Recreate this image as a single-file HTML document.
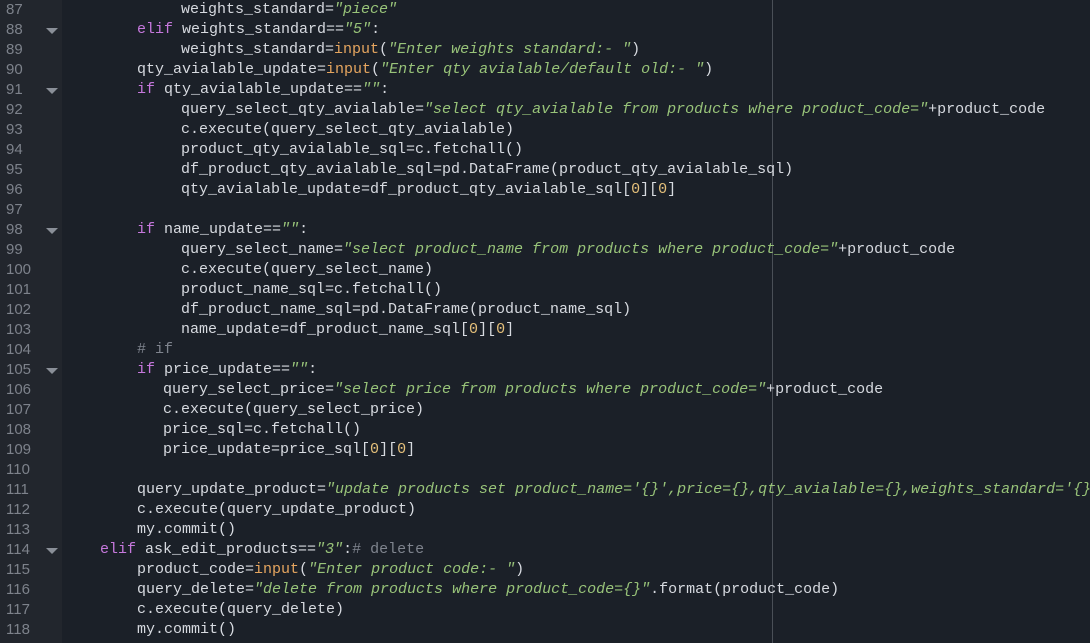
<!DOCTYPE html>
<html><head><meta charset="utf-8"><style>
html,body{margin:0;padding:0;width:1090px;height:643px;overflow:hidden;background:#1b2028;}
#g{position:absolute;left:0;top:0;width:62px;height:643px;background:#22262d;}
#r{position:absolute;left:772px;top:0;width:1px;height:643px;background:#4a4f57;}
.l{position:absolute;height:20px;line-height:20px;font-family:"Liberation Mono",monospace;font-size:15px;color:#d7dae0;white-space:pre;}
.n{position:absolute;left:6px;height:20px;line-height:20px;font-family:"Liberation Sans",sans-serif;font-size:15px;color:#7d828b;}
.a{position:absolute;left:46px;width:0;height:0;border-left:6px solid transparent;border-right:6px solid transparent;border-top:6px solid #8a8f98;}
.k{color:#c678dd}.s{color:#98c379;font-style:italic}.f{color:#e5a55f}.d{color:#e5c07b}.c{color:#7f848e}
</style></head><body>
<div id="g"></div><div id="r"></div>
<div class="n" style="top:0">87</div>
<div class="n" style="top:20px">88</div><div class="a" style="top:28px"></div>
<div class="n" style="top:40px">89</div>
<div class="n" style="top:60px">90</div>
<div class="n" style="top:80px">91</div><div class="a" style="top:88px"></div>
<div class="n" style="top:100px">92</div>
<div class="n" style="top:120px">93</div>
<div class="n" style="top:140px">94</div>
<div class="n" style="top:160px">95</div>
<div class="n" style="top:180px">96</div>
<div class="n" style="top:200px">97</div>
<div class="n" style="top:220px">98</div><div class="a" style="top:228px"></div>
<div class="n" style="top:240px">99</div>
<div class="n" style="top:260px">100</div>
<div class="n" style="top:280px">101</div>
<div class="n" style="top:300px">102</div>
<div class="n" style="top:320px">103</div>
<div class="n" style="top:340px">104</div>
<div class="n" style="top:360px">105</div><div class="a" style="top:368px"></div>
<div class="n" style="top:380px">106</div>
<div class="n" style="top:400px">107</div>
<div class="n" style="top:420px">108</div>
<div class="n" style="top:440px">109</div>
<div class="n" style="top:460px">110</div>
<div class="n" style="top:480px">111</div>
<div class="n" style="top:500px">112</div>
<div class="n" style="top:520px">113</div>
<div class="n" style="top:540px">114</div><div class="a" style="top:548px"></div>
<div class="n" style="top:560px">115</div>
<div class="n" style="top:580px">116</div>
<div class="n" style="top:600px">117</div>
<div class="n" style="top:620px">118</div>

<div class="l" style="top:0;left:181px">weights_standard=<span class="s">"piece"</span></div>
<div class="l" style="top:20px;left:137px"><span class="k">elif</span> weights_standard==<span class="s">"5"</span>:</div>
<div class="l" style="top:40px;left:181px">weights_standard=<span class="f">input</span>(<span class="s">"Enter weights standard:- "</span>)</div>
<div class="l" style="top:60px;left:137px">qty_avialable_update=<span class="f">input</span>(<span class="s">"Enter qty avialable/default old:- "</span>)</div>
<div class="l" style="top:80px;left:137px"><span class="k">if</span> qty_avialable_update==<span class="s">""</span>:</div>
<div class="l" style="top:100px;left:181px">query_select_qty_avialable=<span class="s">"select qty_avialable from products where product_code="</span>+product_code</div>
<div class="l" style="top:120px;left:181px">c.execute(query_select_qty_avialable)</div>
<div class="l" style="top:140px;left:181px">product_qty_avialable_sql=c.fetchall()</div>
<div class="l" style="top:160px;left:181px">df_product_qty_avialable_sql=pd.DataFrame(product_qty_avialable_sql)</div>
<div class="l" style="top:180px;left:181px">qty_avialable_update=df_product_qty_avialable_sql[<span class="d">0</span>][<span class="d">0</span>]</div>
<div class="l" style="top:220px;left:137px"><span class="k">if</span> name_update==<span class="s">""</span>:</div>
<div class="l" style="top:240px;left:181px">query_select_name=<span class="s">"select product_name from products where product_code="</span>+product_code</div>
<div class="l" style="top:260px;left:181px">c.execute(query_select_name)</div>
<div class="l" style="top:280px;left:181px">product_name_sql=c.fetchall()</div>
<div class="l" style="top:300px;left:181px">df_product_name_sql=pd.DataFrame(product_name_sql)</div>
<div class="l" style="top:320px;left:181px">name_update=df_product_name_sql[<span class="d">0</span>][<span class="d">0</span>]</div>
<div class="l" style="top:340px;left:137px"><span class="c"># if</span></div>
<div class="l" style="top:360px;left:137px"><span class="k">if</span> price_update==<span class="s">""</span>:</div>
<div class="l" style="top:380px;left:163px">query_select_price=<span class="s">"select price from products where product_code="</span>+product_code</div>
<div class="l" style="top:400px;left:163px">c.execute(query_select_price)</div>
<div class="l" style="top:420px;left:163px">price_sql=c.fetchall()</div>
<div class="l" style="top:440px;left:163px">price_update=price_sql[<span class="d">0</span>][<span class="d">0</span>]</div>
<div class="l" style="top:480px;left:137px">query_update_product=<span class="s">"update products set product_name='{}',price={},qty_avialable={},weights_standard='{}</span></div>
<div class="l" style="top:500px;left:137px">c.execute(query_update_product)</div>
<div class="l" style="top:520px;left:137px">my.commit()</div>
<div class="l" style="top:540px;left:100px"><span class="k">elif</span> ask_edit_products==<span class="s">"3"</span>:<span class="c"># delete</span></div>
<div class="l" style="top:560px;left:137px">product_code=<span class="f">input</span>(<span class="s">"Enter product code:- "</span>)</div>
<div class="l" style="top:580px;left:137px">query_delete=<span class="s">"delete from products where product_code={}"</span>.format(product_code)</div>
<div class="l" style="top:600px;left:137px">c.execute(query_delete)</div>
<div class="l" style="top:620px;left:137px">my.commit()</div>
</body></html>
